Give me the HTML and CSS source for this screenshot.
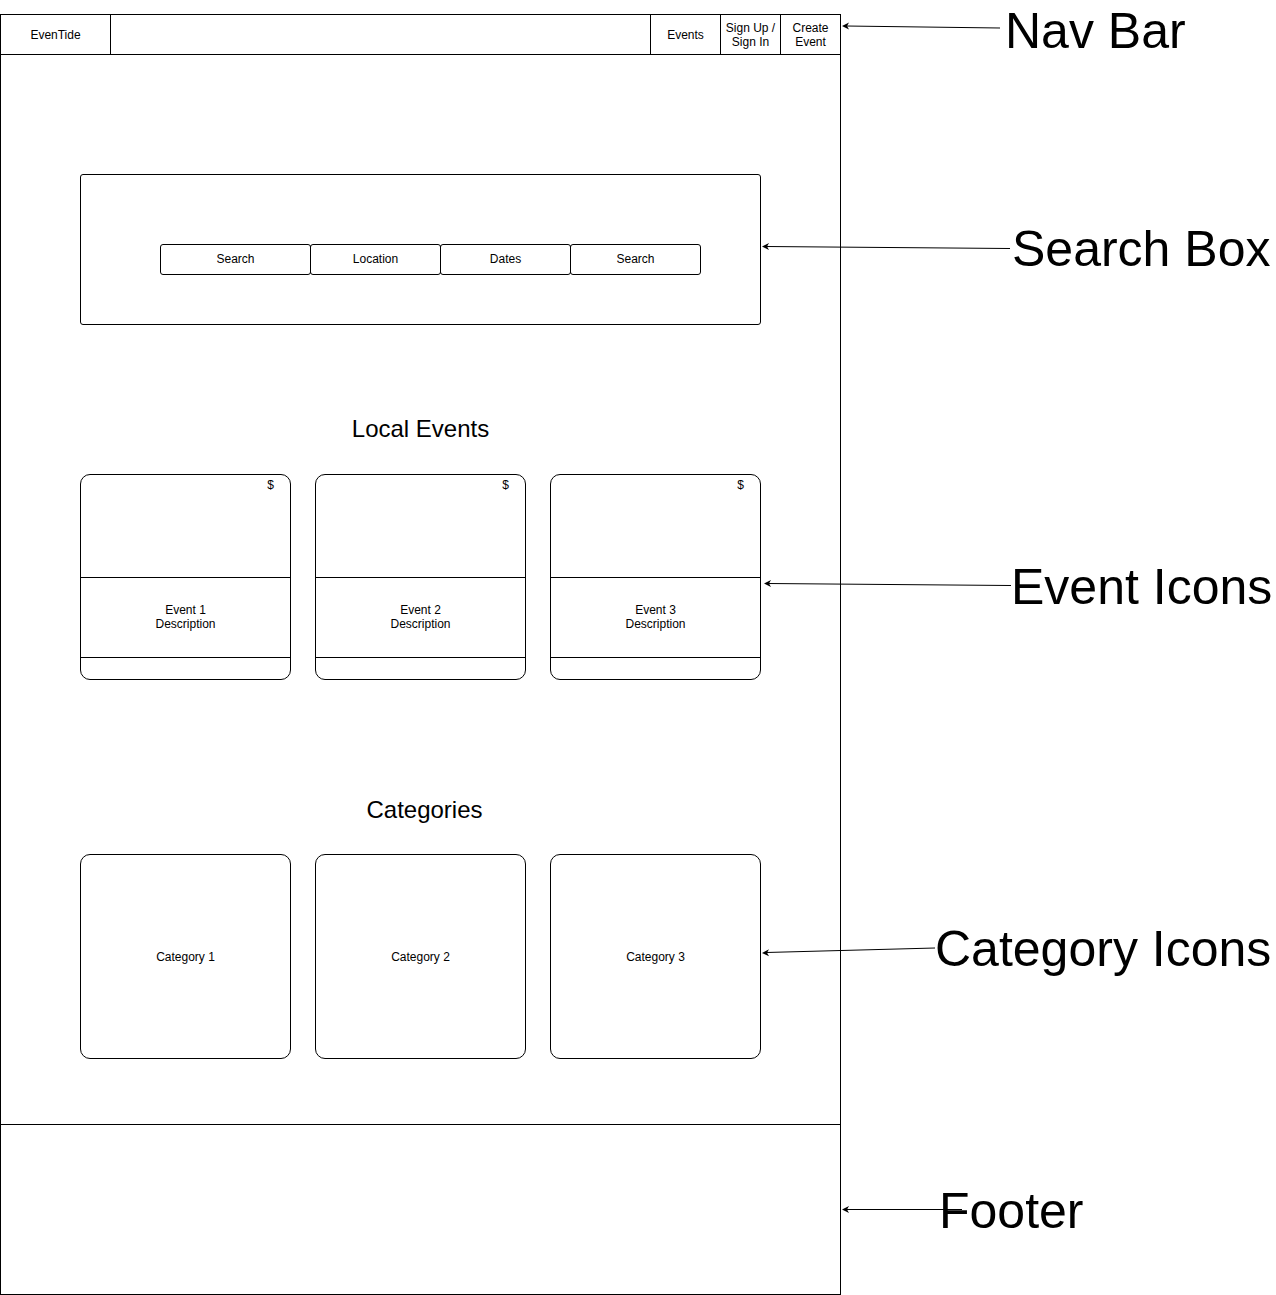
FILE: index.html
```html
<!DOCTYPE html>
<html lang="en">

<head>
    <meta charset="UTF-8">
    <meta name="viewport" content="width=device-width, initial-scale=1.0">
    <title>EvenTide Wireframe</title>
    <link rel="stylesheet" href="styles.css">
</head>

<body>
    <div class="canvas">
        <div class="frame">
            <nav class="navbar">
                <div class="nav-cell brand">EvenTide</div>
                <div class="nav-cell spacer"></div>
                <div class="nav-cell events">Events</div>
                <div class="nav-cell signup">Sign Up /<br>Sign In</div>
                <div class="nav-cell create">Create<br>Event</div>
            </nav>

            <main class="content">
                <div class="search-box">
                    <div class="search-row">
                        <div class="field field-wide">Search</div>
                        <div class="field">Location</div>
                        <div class="field">Dates</div>
                        <div class="field">Search</div>
                    </div>
                </div>

                <h2 class="section-title">Local Events</h2>
                <div class="card-row">
                    <div class="event-card">
                        <div class="event-image"><span class="price">$</span></div>
                        <div class="event-desc">Event 1<br>Description</div>
                        <div class="event-foot"></div>
                    </div>
                    <div class="event-card">
                        <div class="event-image"><span class="price">$</span></div>
                        <div class="event-desc">Event 2<br>Description</div>
                        <div class="event-foot"></div>
                    </div>
                    <div class="event-card">
                        <div class="event-image"><span class="price">$</span></div>
                        <div class="event-desc">Event 3<br>Description</div>
                        <div class="event-foot"></div>
                    </div>
                </div>

                <h2 class="section-title categories-title">Categories</h2>
                <div class="card-row">
                    <div class="category-card">Category 1</div>
                    <div class="category-card">Category 2</div>
                    <div class="category-card">Category 3</div>
                </div>
            </main>

            <footer class="footer"></footer>
        </div>

        <!-- annotations sit on the diagram canvas -->
        <svg class="arrows" width="1276" height="1295" viewBox="0 0 1276 1295">
            <g stroke="#000" stroke-width="1" fill="none">
                <line x1="1000" y1="28" x2="846" y2="26" />
                <line x1="1010" y1="248.5" x2="766" y2="246.5" />
                <line x1="1011" y1="585.5" x2="768" y2="583.5" />
                <line x1="935" y1="948" x2="766" y2="952.5" />
                <line x1="962" y1="1209.5" x2="846" y2="1209.5" />
            </g>
            <g fill="#000">
                <path d="M842 26 L849 22.5 L847 26 L849 29.5 Z" />
                <path d="M762 246.5 L769 243 L767 246.5 L769 250 Z" />
                <path d="M764 583.5 L771 580 L769 583.5 L771 587 Z" />
                <path d="M762 953 L769 949.3 L767 952.8 L769 956.3 Z" />
                <path d="M842 1209.5 L849 1206 L847 1209.5 L849 1213 Z" />
            </g>
        </svg>
        <div class="note note-nav">Nav Bar</div>
        <div class="note note-search">Search Box</div>
        <div class="note note-events">Event Icons</div>
        <div class="note note-categories">Category Icons</div>
        <div class="note note-footer">Footer</div>
    </div>
</body>

</html>
```

FILE: styles.css
```css
body {
    margin: 0;
    background: #fff;
    color: #000;
    font-family: "Liberation Sans", Arial, sans-serif;
}

.canvas {
    position: relative;
    width: 1276px;
    height: 1295px;
    padding-top: 14px;
    box-sizing: border-box;
    overflow: hidden;
}

.frame {
    width: 841px;
    height: 1281px;
    border: 1px solid #000;
    box-sizing: border-box;
    display: flex;
    flex-direction: column;
}

/* nav bar */
.navbar {
    display: flex;
    height: 40px;
    border-bottom: 1px solid #000;
    box-sizing: border-box;
}

.nav-cell {
    display: flex;
    align-items: center;
    justify-content: center;
    text-align: center;
    font-size: 12px;
    line-height: 14px;
    border-right: 1px solid #000;
    box-sizing: border-box;
}

.brand {
    width: 110px;
}

.spacer {
    flex: 1;
}

.events {
    width: 70px;
}

.signup {
    width: 60px;
}

.create {
    width: 59px;
    border-right: none;
}

/* main area */
.content {
    flex: 1;
    padding: 119px 79px 0;
    box-sizing: border-box;
}

.search-box {
    height: 151px;
    border: 1px solid #000;
    border-radius: 3px;
    box-sizing: border-box;
    padding: 69px 0 0 79px;
}

.search-row {
    display: flex;
}

.field {
    width: 131px;
    height: 31px;
    margin-left: -1px;
    padding-bottom: 2px;
    border: 1px solid #000;
    border-radius: 3px;
    box-sizing: border-box;
    display: flex;
    align-items: center;
    justify-content: center;
    font-size: 12px;
}

.field-wide {
    width: 151px;
    margin-left: 0;
}

.section-title {
    margin: 91px 0 32px;
    font-size: 24px;
    line-height: 26px;
    font-weight: normal;
    text-align: center;
}

.categories-title {
    margin-top: 117px;
    margin-bottom: 31px;
    padding-left: 8px;
}

.card-row {
    display: flex;
    gap: 24px;
}

.event-card {
    width: 211px;
    height: 206px;
    border: 1px solid #000;
    border-radius: 10px;
    box-sizing: border-box;
    display: flex;
    flex-direction: column;
    font-size: 12px;
    line-height: 14px;
}

.event-image {
    height: 103px;
    border-bottom: 1px solid #000;
    box-sizing: border-box;
    padding: 3px 16px 0 0;
    text-align: right;
}

.event-desc {
    height: 80px;
    padding-bottom: 2px;
    border-bottom: 1px solid #000;
    box-sizing: border-box;
    display: flex;
    align-items: center;
    justify-content: center;
    text-align: center;
}

.event-foot {
    flex: 1;
}

.category-card {
    width: 211px;
    height: 205px;
    border: 1px solid #000;
    border-radius: 10px;
    box-sizing: border-box;
    display: flex;
    align-items: center;
    justify-content: center;
    font-size: 12px;
}

.footer {
    height: 170px;
    border-top: 1px solid #000;
    box-sizing: border-box;
}

/* annotations */
.arrows {
    position: absolute;
    left: 0;
    top: 0;
    pointer-events: none;
}

.note {
    position: absolute;
    font-size: 50px;
    line-height: 50px;
    white-space: nowrap;
}

.note-nav {
    left: 1005px;
    top: 6px;
}

.note-search {
    left: 1012px;
    top: 224px;
}

.note-events {
    left: 1011px;
    top: 562px;
}

.note-categories {
    left: 935px;
    top: 924px;
}

.note-footer {
    left: 939px;
    top: 1186px;
}
```
